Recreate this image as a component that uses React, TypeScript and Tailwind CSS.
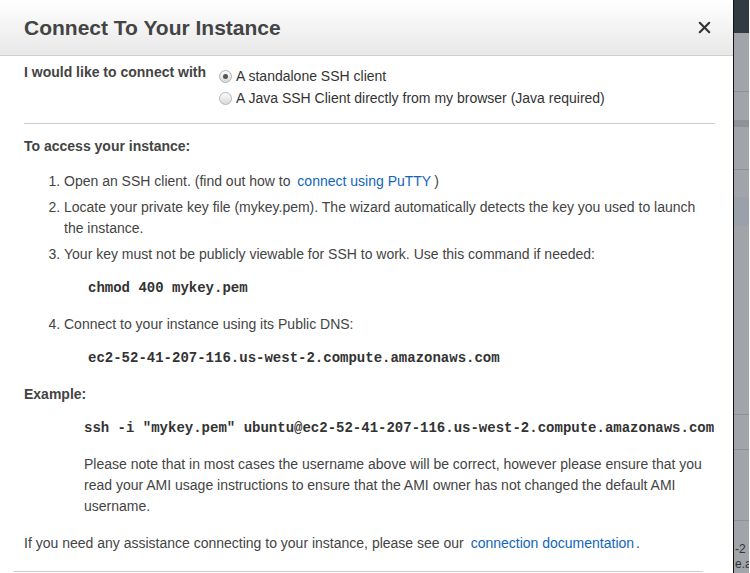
import { X } from 'lucide-react'

const sans = "font-['Liberation_Sans',Arial,sans-serif]"
const mono = "font-['Liberation_Mono','Courier_New',monospace] font-bold text-[14px] leading-[21px] text-[#333]"

function Radio({ checked }: { checked?: boolean }) {
  return (
    <span className="mr-[4px] flex h-[13px] w-[13px] shrink-0 items-center justify-center rounded-full border border-[#b4b4b4] bg-gradient-to-b from-[#fdfdfd] to-[#d9d9d9]">
      {checked && <span className="h-[5px] w-[5px] rounded-full bg-[#555]" />}
    </span>
  )
}

function SideStrip() {
  return (
    <div className="flex w-[16px] shrink-0 flex-col overflow-hidden border-l border-[#111] bg-[#a1a5a9]">
      <div className="h-[33px] shrink-0 bg-[#323a42]" />
      <div className="h-[58px] shrink-0" />
      <div className="h-[1px] shrink-0 bg-[#8e9296]" />
      <div className="h-[28px] shrink-0" />
      <div className="h-[7px] shrink-0 bg-[#8f9397]" />
      <div className="h-[42px] shrink-0" />
      <div className="h-[1px] shrink-0 bg-[#8e9296]" />
      <div className="h-[27px] shrink-0" />
      <div className="h-[29px] shrink-0 bg-[#9aa1aa]" />
      <div className="h-[188px] shrink-0" />
      <div className="h-[1px] shrink-0 bg-[#8e9296]" />
      <div className="h-[34px] shrink-0" />
      <div className="h-[1px] shrink-0 bg-[#8e9296]" />
      <div className="h-[70px] shrink-0" />
      <div className="h-[1px] shrink-0 bg-[#8e9296]" />
      <div className="h-[20px] shrink-0" />
      <div className={`shrink-0 pl-[1px] text-[12px] leading-[16px] text-[#333] ${sans}`}>-2</div>
      <div className={`shrink-0 pl-[1px] text-[12px] leading-[14px] text-[#333] ${sans}`}>e.a</div>
    </div>
  )
}

export default function App() {
  return (
    <div className={`flex h-[573px] w-[750px] overflow-hidden bg-white ${sans}`}>
      <div className="flex w-[733px] shrink-0 flex-col bg-white text-[14px] leading-[21px] text-[#444]">
        <div className="flex h-[56px] shrink-0 items-center justify-between border-b border-[#cfcfcf] bg-gradient-to-b from-[#ffffff] to-[#e8e8e8] pl-[24px] pr-[19px]">
          <h1 className="text-[21px] font-bold text-[#444]">Connect To Your Instance</h1>
          <X className="h-[19px] w-[19px] text-[#333]" strokeWidth={2.6} />
        </div>

        <div className="pl-[24px] pr-[18px]">
          <div className="mt-[6px] flex">
            <div className="w-[195px] font-bold">I would like to connect with</div>
            <div className="pt-[3px] text-[#333]">
              <label className="flex h-[22px] items-center">
                <Radio checked />
                A standalone SSH client
              </label>
              <label className="flex h-[22px] items-center">
                <Radio />
                A Java SSH Client directly from my browser (Java required)
              </label>
            </div>
          </div>

          <hr className="mt-[14px] border-[#cccccc]" />

          <div className="mt-[12px] font-bold">To access your instance:</div>

          <ol className="mt-[14px] list-decimal pl-[40px]">
            <li>
              Open an SSH client. (find out how to{' '}
              <a className="ml-[3px] mr-[3px] text-[#1166bb]">connect using PuTTY</a>)
            </li>
            <li className="mt-[5px]">
              Locate your private key file (mykey.pem). The wizard automatically detects the key you used to launch the
              instance.
            </li>
            <li className="mt-[5px]">
              Your key must not be publicly viewable for SSH to work. Use this command if needed:
              <div className={`mt-[13px] pl-[24px] ${mono}`}>chmod 400 mykey.pem</div>
            </li>
            <li className="mt-[15px]">
              Connect to your instance using its Public DNS:
              <div className={`mt-[13px] pl-[24px] ${mono}`}>ec2-52-41-207-116.us-west-2.compute.amazonaws.com</div>
            </li>
          </ol>

          <div className="mt-[15px] font-bold">Example:</div>
          <div className="pl-[60px]">
            <div className={`mt-[13px] whitespace-nowrap ${mono}`}>
              ssh -i "mykey.pem" ubuntu@ec2-52-41-207-116.us-west-2.compute.amazonaws.com
            </div>
            <p className="mt-[15px]">
              Please note that in most cases the username above will be correct, however please ensure that you read your
              AMI usage instructions to ensure that the AMI owner has not changed the default AMI username.
            </p>
          </div>

          <p className="mt-[16px]">
            If you need any assistance connecting to your instance, please see our{' '}
            <a className="ml-[3px] mr-[2px] text-[#1166bb]">connection documentation</a>.
          </p>
        </div>

        <hr className="ml-[14px] mr-[30px] mt-[17px] border-[#cccccc]" />
      </div>
      <SideStrip />
    </div>
  )
}
